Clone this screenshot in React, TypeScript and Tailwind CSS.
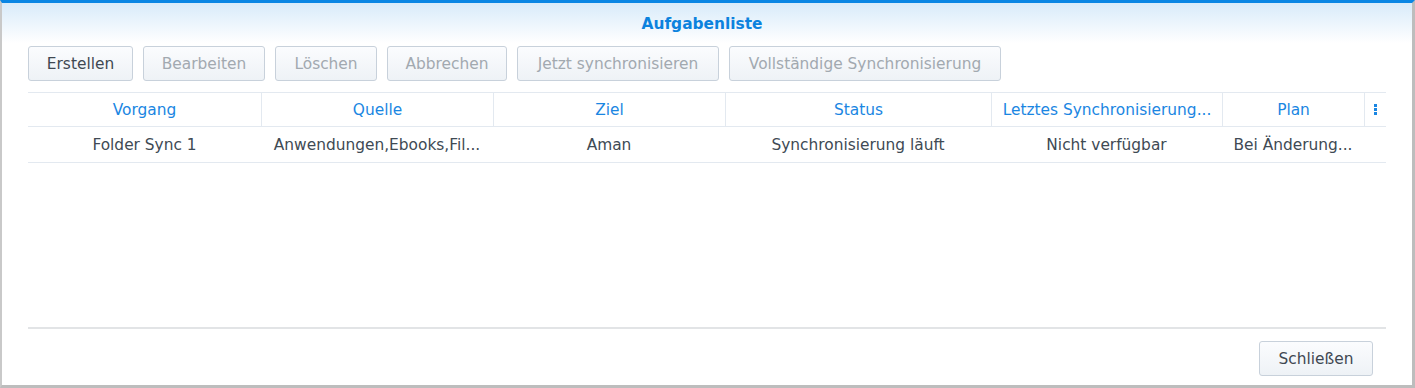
import React from "react";

const cols = [
  { label: "Vorgang", w: 233 },
  { label: "Quelle", w: 232 },
  { label: "Ziel", w: 232 },
  { label: "Status", w: 266 },
  { label: "Letztes Synchronisierung...", w: 231 },
  { label: "Plan", w: 142 },
];

const row = [
  "Folder Sync 1",
  "Anwendungen,Ebooks,Fil...",
  "Aman",
  "Synchronisierung läuft",
  "Nicht verfügbar",
  "Bei Änderung...",
];

function Btn({ children, disabled, w }: { children: React.ReactNode; disabled?: boolean; w: string }) {
  return (
    <div
      className={`${w} h-[35px] pt-[2px] flex items-center justify-center rounded-[3px] border border-[#c8d1db] bg-gradient-to-b from-[#fbfcfe] to-[#eef2f6] ${
        disabled ? "text-[#a2a9b0]" : "text-[#3f4852]"
      }`}
    >
      {children}
    </div>
  );
}

export default function App() {
  return (
    <div
      className="w-[1415px] h-[388px] bg-white text-[15.4px] leading-none"
      style={{ fontFamily: '"DejaVu Sans", Verdana, sans-serif' }}
    >
      <div className="w-[1415px] h-[388px] flex flex-col border-t-[3px] border-t-[#0a86e4] border-l-2 border-l-[#c9c9c9] border-r-[3px] border-r-[#bdbdbd] border-b-[3px] border-b-[#bdbdbd]">
        <div className="h-[40px] pt-[3px] pr-[10px] flex items-center justify-center bg-gradient-to-b from-[#d8ebfa] to-white">
          <span className="font-bold text-[#0c82de]">Aufgabenliste</span>
        </div>
        <div className="px-[26px] flex-1 flex flex-col">
          <div className="mt-[3px] flex gap-[10px]">
            <Btn w="w-[105px]">Erstellen</Btn>
            <Btn w="w-[122px]" disabled>Bearbeiten</Btn>
            <Btn w="w-[102px]" disabled>Löschen</Btn>
            <Btn w="w-[120px]" disabled>Abbrechen</Btn>
            <Btn w="w-[202px]" disabled>Jetzt synchronisieren</Btn>
            <Btn w="w-[272px]" disabled>Vollständige Synchronisierung</Btn>
          </div>
          <div className="mt-[11px] w-[1358px]">
            <div className="flex h-[35px] border-t border-b border-[#e3e9f0]">
              {cols.map((c, i) => (
                <div
                  key={c.label}
                  style={{ width: c.w }}
                  className={`flex items-center justify-center pt-[2px] text-[#1a86e2] whitespace-nowrap overflow-hidden ${
                    i > 0 ? "border-l border-[#e3e9f0]" : ""
                  }`}
                >
                  {c.label}
                </div>
              ))}
              <div className="w-[22px] flex flex-col items-center justify-center gap-[1px] border-l border-[#e3e9f0]">
                <div className="w-[3px] h-[3px] bg-[#1a86e2]" />
                <div className="w-[3px] h-[3px] bg-[#1a86e2]" />
                <div className="w-[3px] h-[3px] bg-[#1a86e2]" />
              </div>
            </div>
            <div className="flex h-[36px] border-b border-[#e3e9f0]">
              {row.map((t, i) => (
                <div
                  key={i}
                  style={{ width: cols[i].w }}
                  className="flex items-center justify-center pt-[3px] text-[#404a54] whitespace-nowrap overflow-hidden"
                >
                  {t}
                </div>
              ))}
            </div>
          </div>
          <div className="mt-auto h-[2px] bg-[#e2e4e6]" />
          <div className="flex justify-end pt-[12px] pb-[9px] pr-[13px]">
            <Btn w="w-[114px]">Schließen</Btn>
          </div>
        </div>
      </div>
    </div>
  );
}
